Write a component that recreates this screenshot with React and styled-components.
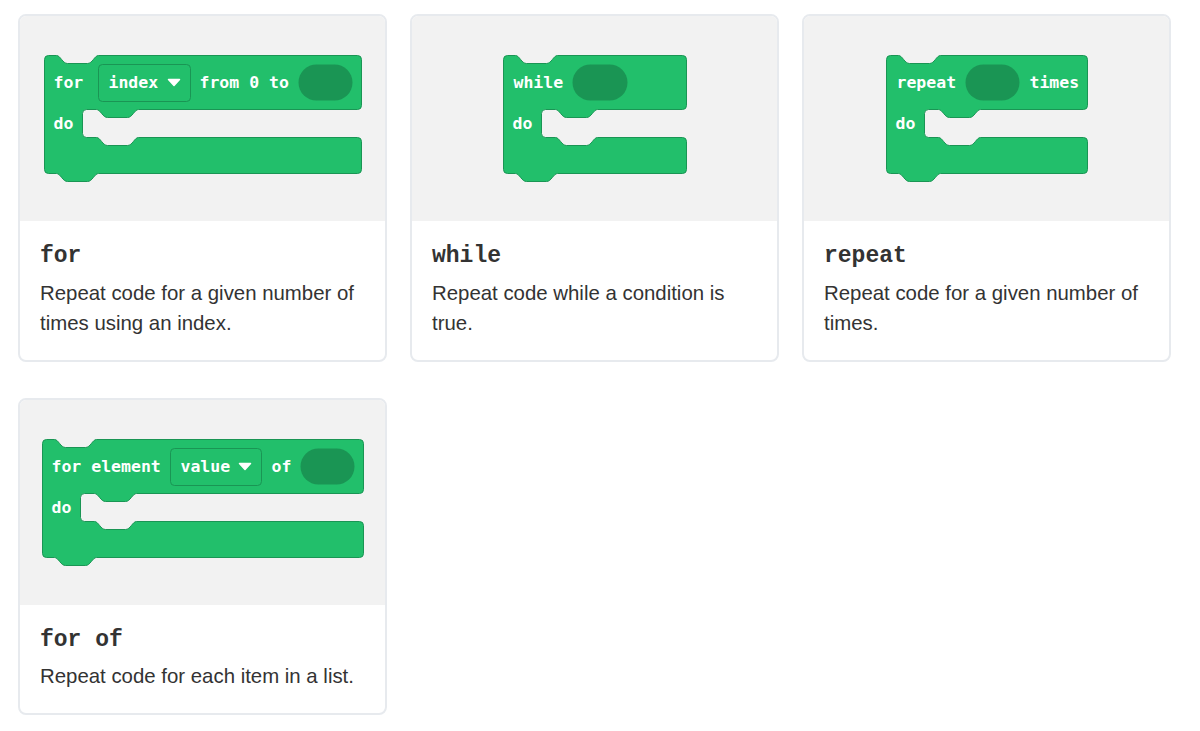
import React from 'react';
import styled, { createGlobalStyle } from 'styled-components';

const GlobalStyle = createGlobalStyle`
  body {
    margin: 0;
    background: #ffffff;
    font-family: 'Liberation Sans', Arial, sans-serif;
  }
`;

// block geometry (px)
const TOP_ROW = 54;
const GAP = 28;
const BOTTOM_ARM = 36;
const LEFT_COL = 38;
const NOTCH_DEPTH = 8;
const HEIGHT = TOP_ROW + GAP + BOTTOM_ARM;

const GREEN = '#22bf6b';
const DARK = '#1a9554';

const Page = styled.div`
  display: grid;
  grid-template-columns: repeat(3, 369px);
  column-gap: 23px;
  row-gap: 36px;
  padding: 14px 0 0 18px;
`;

const Card = styled.div`
  display: flex;
  flex-direction: column;
  border: 2px solid #e7eaee;
  border-radius: 8px;
  overflow: hidden;
  background: #ffffff;
  box-sizing: border-box;
`;

const Preview = styled.div`
  height: 205px;
  flex-shrink: 0;
  background: #f2f2f2;
  display: flex;
  align-items: center;
  justify-content: center;
`;

const Body = styled.div`
  padding: 22px 20px 22px 20px;
`;

const Title = styled.h3`
  margin: 0 0 7px;
  font-family: 'Liberation Mono', 'DejaVu Sans Mono', monospace;
  font-weight: 700;
  font-size: 23px;
  line-height: 1.2;
  color: #333333;
`;

const Description = styled.p`
  margin: 0;
  font-size: 20.4px;
  line-height: 30px;
  color: #333333;
`;

const BlockSvg = styled.svg`
  display: block;
  overflow: visible;
`;

const Label = styled.text`
  font-family: 'DejaVu Sans Mono', monospace;
  font-weight: 700;
  font-size: 16.5px;
  fill: #ffffff;
`;

const notch = (x, y, dir, depth = NOTCH_DEPTH) => {
  // dir 1 = left to right, -1 = right to left
  if (dir === 1) {
    return `L ${x} ${y} C ${x + 4} ${y} ${x + 6} ${y + depth} ${x + 11} ${y + depth} L ${x + 31} ${y + depth} C ${x + 36} ${y + depth} ${x + 38} ${y} ${x + 42} ${y}`;
  }
  return `L ${x + 42} ${y} C ${x + 38} ${y} ${x + 36} ${y + depth} ${x + 31} ${y + depth} L ${x + 11} ${y + depth} C ${x + 6} ${y + depth} ${x + 4} ${y} ${x} ${y}`;
};

const shapePath = (w) => {
  const r = 4;
  const n = 12;
  const ni = LEFT_COL + 14;
  const g0 = TOP_ROW;
  const g1 = TOP_ROW + GAP;
  return [
    `M 0 ${r}`,
    `Q 0 0 ${r} 0`,
    notch(n, 0, 1),
    `L ${w - r} 0`,
    `Q ${w} 0 ${w} ${r}`,
    `L ${w} ${g0 - r}`,
    `Q ${w} ${g0} ${w - r} ${g0}`,
    notch(ni, g0, -1),
    `L ${LEFT_COL + r} ${g0}`,
    `Q ${LEFT_COL} ${g0} ${LEFT_COL} ${g0 + r}`,
    `L ${LEFT_COL} ${g1 - r}`,
    `Q ${LEFT_COL} ${g1} ${LEFT_COL + r} ${g1}`,
    notch(ni, g1, 1),
    `L ${w - r} ${g1}`,
    `Q ${w} ${g1} ${w} ${g1 + r}`,
    `L ${w} ${HEIGHT - r}`,
    `Q ${w} ${HEIGHT} ${w - r} ${HEIGHT}`,
    notch(n, HEIGHT, -1),
    `L ${r} ${HEIGHT}`,
    `Q 0 ${HEIGHT} 0 ${HEIGHT - r}`,
    'Z',
  ].join(' ');
};

const Part = ({ part }) => {
  const mid = TOP_ROW / 2;
  if (part.type === 'label') {
    return (
      <Label x={part.x} y={mid} dominantBaseline="central">
        {part.text}
      </Label>
    );
  }
  if (part.type === 'slot') {
    return <rect x={part.x} y={9} width={part.w} height={36} rx={18} fill={DARK} />;
  }
  // dropdown
  const tx = part.x + part.w - 22;
  return (
    <g>
      <rect x={part.x} y={9} width={part.w} height={37} rx={4} fill={GREEN} stroke={DARK} strokeWidth={1} />
      <Label x={part.x + 10} y={mid} dominantBaseline="central">
        {part.text}
      </Label>
      <path
        d={`M ${tx} ${mid - 3} L ${tx + 11} ${mid - 3} L ${tx + 5.5} ${mid + 3} Z`}
        fill="#ffffff"
        stroke="#ffffff"
        strokeWidth={1.5}
        strokeLinejoin="round"
      />
    </g>
  );
};

const LoopBlock = ({ width, parts }) => (
  <BlockSvg width={width + 1} height={HEIGHT + NOTCH_DEPTH + 1} viewBox={`-0.5 -0.5 ${width + 1} ${HEIGHT + NOTCH_DEPTH + 1}`}>
    <path d={shapePath(width)} fill={GREEN} stroke={DARK} strokeWidth={1} strokeLinejoin="round" />
    {parts.map((p, i) => (
      <Part key={i} part={p} />
    ))}
    <Label x={9} y={TOP_ROW + GAP / 2} dominantBaseline="central">
      do
    </Label>
  </BlockSvg>
);

const loops = [
  {
    title: 'for',
    text: 'Repeat code for a given number of times using an index.',
    width: 317,
    parts: [
      { type: 'label', x: 9, text: 'for' },
      { type: 'dropdown', x: 54, w: 92, text: 'index' },
      { type: 'label', x: 155, text: 'from 0 to' },
      { type: 'slot', x: 254, w: 54 },
    ],
  },
  {
    title: 'while',
    text: 'Repeat code while a condition is true.',
    width: 183,
    parts: [
      { type: 'label', x: 10, text: 'while' },
      { type: 'slot', x: 69, w: 55 },
    ],
  },
  {
    title: 'repeat',
    text: 'Repeat code for a given number of times.',
    width: 201,
    parts: [
      { type: 'label', x: 10, text: 'repeat' },
      { type: 'slot', x: 79, w: 54 },
      { type: 'label', x: 143, text: 'times' },
    ],
  },
  {
    title: 'for of',
    text: 'Repeat code for each item in a list.',
    width: 321,
    parts: [
      { type: 'label', x: 9, text: 'for element' },
      { type: 'dropdown', x: 128, w: 91, text: 'value' },
      { type: 'label', x: 229, text: 'of' },
      { type: 'slot', x: 258, w: 54 },
    ],
  },
];

export default function App() {
  return (
    <>
      <GlobalStyle />
      <Page>
        {loops.map((loop) => (
          <Card key={loop.title}>
            <Preview>
              <LoopBlock width={loop.width} parts={loop.parts} />
            </Preview>
            <Body>
              <Title>{loop.title}</Title>
              <Description>{loop.text}</Description>
            </Body>
          </Card>
        ))}
      </Page>
    </>
  );
}
